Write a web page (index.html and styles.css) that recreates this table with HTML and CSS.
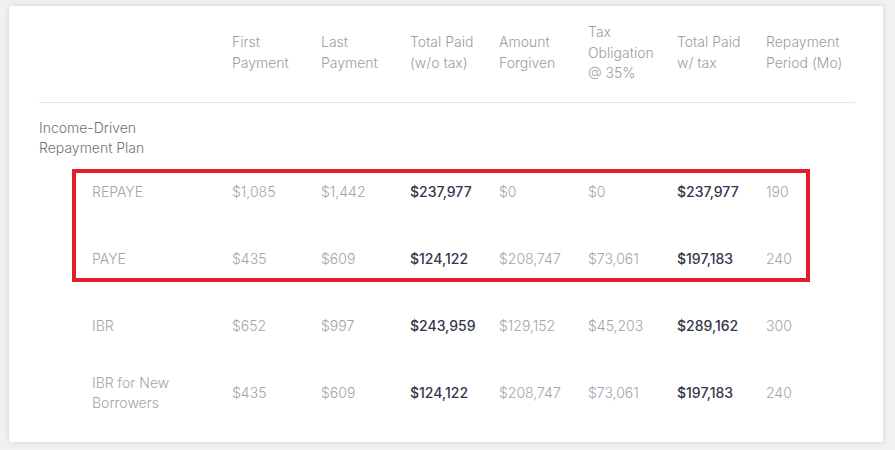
FILE: index.html
```html
<!DOCTYPE html>
<html lang="en">
  <head>
    <meta charset="UTF-8" />
    <meta name="viewport" content="width=device-width, initial-scale=1.0" />
    <title>Repayment Plans</title>
    <link rel="stylesheet" href="styles.css">
  </head>
  <body>
    <!-- Plan comparison card -->
    <div class="card">
      <table class="plans">
        <colgroup>
          <col class="col-name" />
          <col span="7" class="col-num" />
        </colgroup>
        <thead>
          <tr>
            <th></th>
            <th>First<br />Payment</th>
            <th>Last<br />Payment</th>
            <th>Total Paid<br />(w/o tax)</th>
            <th>Amount<br />Forgiven</th>
            <th>Tax<br />Obligation<br />@ 35%</th>
            <th>Total Paid<br />w/ tax</th>
            <th>Repayment<br />Period (Mo)</th>
          </tr>
        </thead>
        <tbody>
          <tr class="group">
            <td colspan="8">Income-Driven<br />Repayment Plan</td>
          </tr>
          <tr class="plan">
            <td class="name">REPAYE</td>
            <td>$1,085</td>
            <td>$1,442</td>
            <td class="strong">$237,977</td>
            <td>$0</td>
            <td>$0</td>
            <td class="strong">$237,977</td>
            <td>190</td>
          </tr>
          <tr class="plan">
            <td class="name">PAYE</td>
            <td>$435</td>
            <td>$609</td>
            <td class="strong">$124,122</td>
            <td>$208,747</td>
            <td>$73,061</td>
            <td class="strong">$197,183</td>
            <td>240</td>
          </tr>
          <tr class="plan">
            <td class="name">IBR</td>
            <td>$652</td>
            <td>$997</td>
            <td class="strong">$243,959</td>
            <td>$129,152</td>
            <td>$45,203</td>
            <td class="strong">$289,162</td>
            <td>300</td>
          </tr>
          <tr class="plan">
            <td class="name">IBR for New<br />Borrowers</td>
            <td>$435</td>
            <td>$609</td>
            <td class="strong">$124,122</td>
            <td>$208,747</td>
            <td>$73,061</td>
            <td class="strong">$197,183</td>
            <td>240</td>
          </tr>
        </tbody>
      </table>

      <!-- highlight around REPAYE / PAYE -->
      <div class="highlight"></div>
    </div>
  </body>
</html>
```

FILE: styles.css
```css
body {
  font-family: Inter, "Noto Sans", sans-serif;
  font-weight: 300;
  font-size: 14px;
  background: #f1f1f2;
  margin: 0;
  padding: 6px 12px 8px 9px;
}

.card {
  position: relative;
  background: white;
  box-shadow: 0 0 6px rgba(0, 0, 0, 0.12);
  padding: 16px 29px 16px 30px;
  height: 404px;
}

.plans {
  width: 815px;
  border-collapse: collapse;
  table-layout: fixed;
  line-height: 20.5px;
  color: #a1a4ad;
}

.col-name {
  width: 193px;
}

.col-num {
  width: 89px;
}

th {
  font-weight: 300;
  text-align: left;
  vertical-align: middle;
  padding: 0 0 18px 0;
  border-bottom: 1px solid #e4e7ee;
  color: #9a9da6;
}

.group td {
  padding: 15px 0 0 0;
  color: #6f727c;
}

.plan td {
  height: 67px;
  padding: 0;
  vertical-align: middle;
}

.plan td.name {
  padding-left: 53px;
}

.strong {
  font-weight: 500;
  color: #34364a;
}

.highlight {
  position: absolute;
  left: 63px;
  top: 163px;
  width: 730px;
  height: 105px;
  border: 4px solid #e31e2b;
}
```
